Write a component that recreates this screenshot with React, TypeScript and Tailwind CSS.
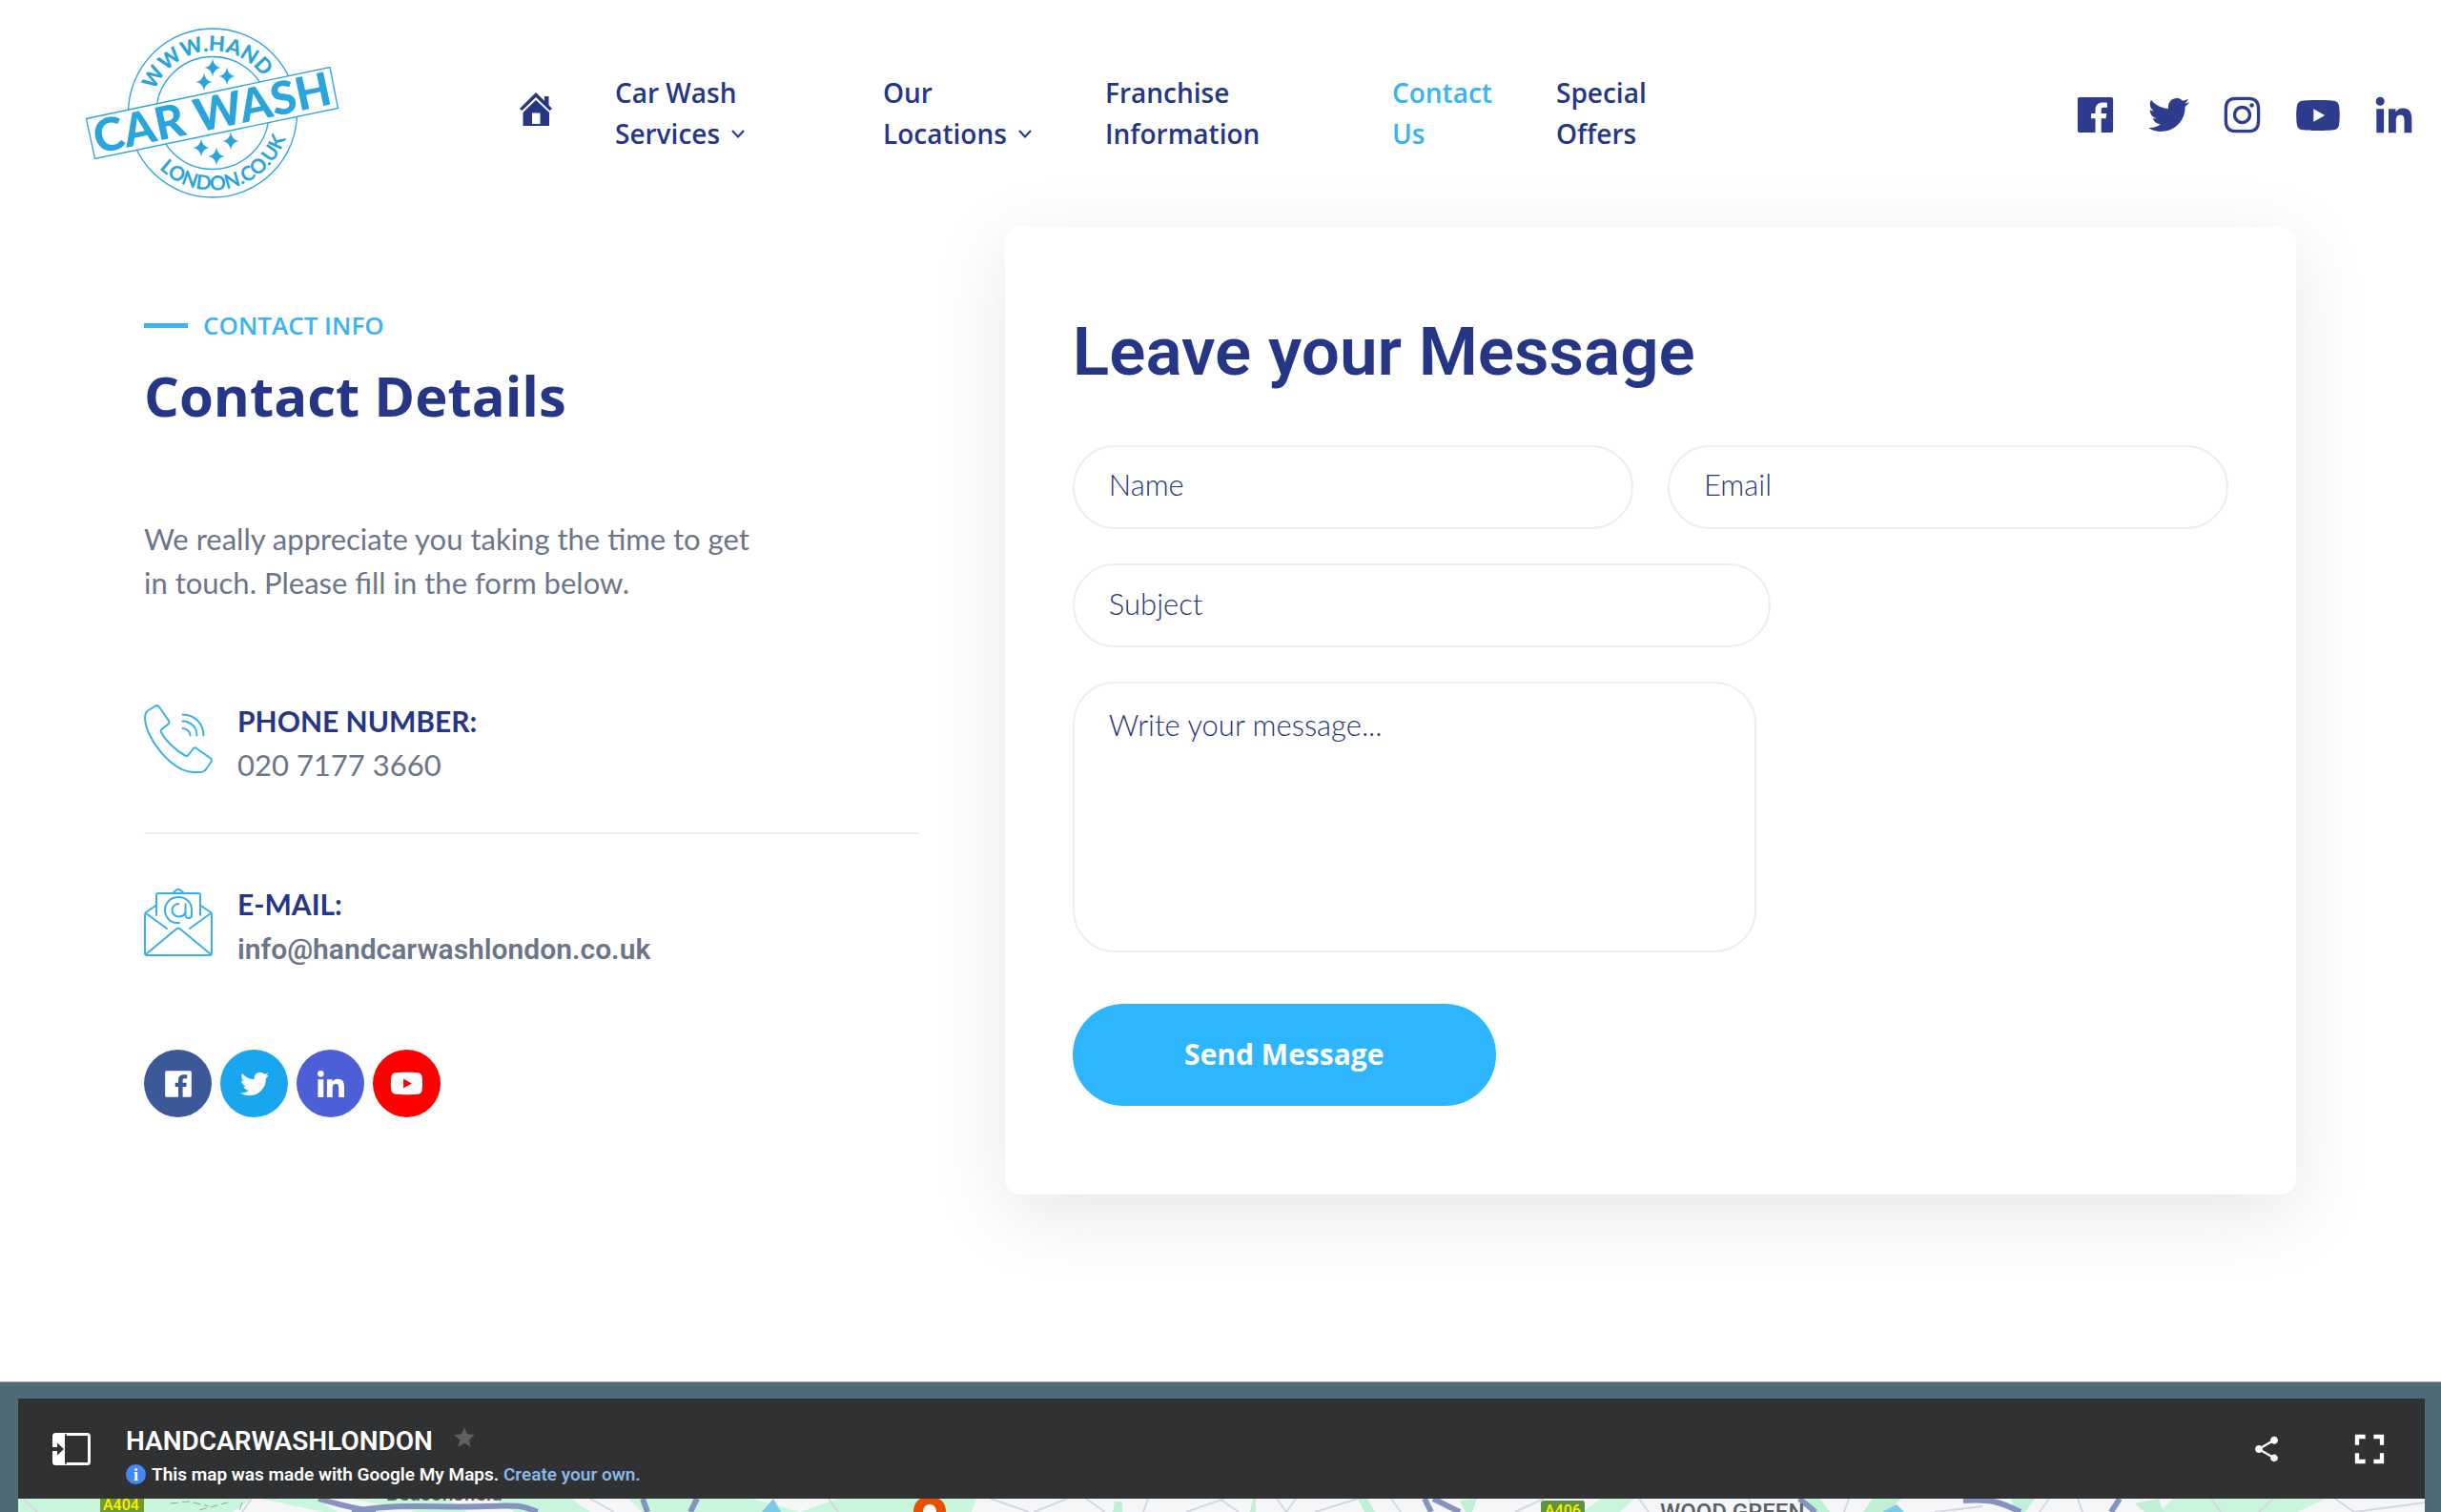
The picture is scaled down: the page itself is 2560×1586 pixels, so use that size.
import React from 'react';
import { FaInstagram, FaTwitter, FaYoutube } from 'react-icons/fa';
import { MdFullscreen, MdShare, MdStar } from 'react-icons/md';

function Logo() {
  const stars = [
    [163, 61],
    [154, 76],
    [178, 70],
    [182, 138],
    [151, 145],
    [167, 154],
  ];
  return (
    <svg viewBox="29 19 267 179" className="w-[267px] shrink-0" role="img" aria-label="Hand Car Wash London">
      <defs>
        <path id="arc-top" d="M98 108.5A65 65 0 0 1 228 108.5" />
        <path id="arc-bottom" d="M82 108.5A81 81 0 0 0 244 108.5" />
      </defs>
      <g fill="none" stroke="#2aa4dc" strokeWidth="1.3">
        <circle cx="163" cy="108.5" r="88.5" />
        <circle cx="163" cy="108.5" r="59" />
        <path d="M30.5 114.5L286 60.5L294.5 103.5L39.5 156.5Z" fill="#fff" />
      </g>
      <g fill="#2aa4dc" fontFamily="Lato, sans-serif" fontWeight="900" textAnchor="middle">
        <text fontSize="22">
          <textPath href="#arc-top" startOffset="46%">WWW.HAND</textPath>
        </text>
        <text fontSize="21" fontWeight="700">
          <textPath href="#arc-bottom" startOffset="57.5%">LONDON.CO.UK</textPath>
        </text>
        <text fontSize="48" transform="translate(166 125) rotate(-12)">CAR WASH</text>
      </g>
      {stars.map(([x, y]) => (
        <path
          key={`${x}-${y}`}
          transform={`translate(${x} ${y})`}
          d="M0-9.5Q1.2-1.2 8.5 0Q1.2 1.2 0 9.5Q-1.2 1.2-8.5 0Q-1.2-1.2 0-9.5Z"
          fill="#2aa4dc"
        />
      ))}
    </svg>
  );
}

function HomeIcon() {
  return (
    <svg viewBox="0 0 34 35" className="h-[35px] w-[34px]" fill="#263686">
      <path d="M17 0L0 17L2.5 19L17 5L31.500 19L34 17L30.500 13.200V4H26V8.800Z" />
      <path d="M17 8L3.500 21V35H31V21ZM13 21.500H21.500V33H13Z" fillRule="evenodd" />
    </svg>
  );
}

function Chevron() {
  return (
    <svg viewBox="0 0 14 9" className="mb-1.5 ml-3 inline-block h-[9px] w-[14px] align-middle" fill="none" stroke="#263686" strokeWidth="2">
      <path d="M1 1L7 7.500L13 1" />
    </svg>
  );
}

function FacebookIcon({ className }: { className: string }) {
  return (
    <svg viewBox="34 34 444 444" className={className} fill="currentColor">
      <path d="M426.800 64H85.200C73.500 64 64 73.500 64 85.200v341.600c0 11.700 9.500 21.200 21.200 21.200H256V296h-45.900v-56H256v-41.400c0-49.600 34.400-76.600 78.700-76.600 21.200 0 44 1.600 49.300 2.300v51.800h-35.300c-24.100 0-28.700 11.400-28.700 28.200V240h57.400l-7.500 56H320v152h106.800c11.700 0 21.200-9.500 21.200-21.200V85.200c0-11.700-9.500-21.200-21.200-21.200z" />
    </svg>
  );
}

function LinkedinIcon({ className }: { className: string }) {
  return (
    <svg viewBox="-32 -32 512 512" className={className} fill="currentColor">
      <path d="M100.280 448H7.400V148.900h92.880zM53.790 108.100C24.090 108.100 0 83.500 0 53.800a53.790 53.790 0 0 1 107.580 0c0 29.700-24.100 54.300-53.790 54.300zM447.900 448h-92.680V302.400c0-34.700-.7-79.200-48.290-79.200-48.290 0-55.690 37.700-55.690 76.700V448h-92.780V148.900h89.080v40.800h1.300c12.400-23.500 42.690-48.300 87.880-48.300 94 0 111.280 61.900 111.280 142.300V448z" />
    </svg>
  );
}

function PhoneIcon() {
  return (
    <svg viewBox="0 0 72 72" className="h-[72px] w-[72px] shrink-0" fill="none" stroke="#3aafea" strokeWidth="2" strokeLinecap="round" strokeLinejoin="round">
      <path d="M12 1.500L4 6.500Q1 9 1 14C1 34 28 70 52 71H58Q63 71 65 68L70.500 60Q71.500 58 70 56.500L55 46Q53 44.500 51.500 46.500L46.500 53Q45 54.500 43 53.500C33 48 22 37 18 29Q17 27 18.500 26L25.500 20.500Q27 19 26 17L15.500 2Q14 .5 12 1.500Z" />
      <path d="M40.500 10.500C53 10.500 62.500 20 62.500 32.500M40.500 17.500C49 17.500 55.500 24 55.500 32.500M40.500 25C45 25 48.500 28.500 48.500 32.500" />
    </svg>
  );
}

function MailIcon() {
  return (
    <svg viewBox="0 0 72 72" className="h-[72px] w-[72px] shrink-0" fill="none" stroke="#3aafea" strokeWidth="2" strokeLinecap="round" strokeLinejoin="round">
      <path d="M13 18.500L2 26Q1 27 1 28.500V69Q1 71 3 71H69Q71 71 71 69V28.500Q71 27 70 26L59 18.500" />
      <path d="M13 29V8Q13 6 15 6H57Q59 6 59 8V29M30 6L34 2.500Q36 1 38 2.500L42 6" />
      <path d="M2 27L24 43M70 27L48 43M2 70L34.500 43Q36 42 37.500 43L70 70" />
      <path d="M37 37C28 38 22 31 22 23.500C22 16 28 10 36 10C44 10 50 15.500 50 23V29C50 33 44 33.500 43.500 29V17.500M43.500 25C43 28.500 40 30.500 36.500 30.500C32.500 30.500 29.500 27.500 29.500 23.800C29.500 20 32.500 17 36.500 17" />
    </svg>
  );
}

function SidePanelIcon() {
  return (
    <svg viewBox="0 0 40 34" className="h-[34px] w-10">
      <rect x="1.500" y="1.500" width="37" height="31" rx="2" fill="none" stroke="#fff" strokeWidth="3" />
      <path d="M2 1H13V33H2Z" fill="#fff" />
      <path d="M0 15H5V10.500L12 17L5 23.500V19H0Z" fill="#2f3132" />
      <path d="M14 1V33" stroke="#2f3132" strokeWidth="1.500" />
    </svg>
  );
}

const navItems = [
  { lines: ['Car Wash', 'Services'], menu: true, className: 'w-[281px] text-[#263686]' },
  { lines: ['Our', 'Locations'], menu: true, className: 'w-[233px] text-[#263686]' },
  { lines: ['Franchise', 'Information'], menu: false, className: 'w-[301px] text-[#263686]' },
  { lines: ['Contact', 'Us'], menu: false, className: 'w-[172px] text-[#36b4f4]' },
  { lines: ['Special', 'Offers'], menu: false, className: 'text-[#263686]' },
];

function Header() {
  return (
    <header className="flex items-center pt-[29px] pr-7 pb-[30px] pl-[89px]">
      <a href="#home"><Logo /></a>
      <nav className="ml-[189px]">
        <ul className="flex items-center font-['Open_Sans',sans-serif] text-[28px] leading-[43px] font-semibold">
          <li className="w-[100px] pb-2">
            <a href="#home" aria-label="Home"><HomeIcon /></a>
          </li>
          {navItems.map((item) => (
            <li key={item.lines[0]} className={item.className}>
              <a href="#menu">
                {item.lines[0]}
                <br />
                {item.lines[1]}
                {item.menu && <Chevron />}
              </a>
            </li>
          ))}
        </ul>
      </nav>
      <div className="ml-auto flex items-center gap-[34px] pt-1 text-[#2d3c8c]">
        <a href="#facebook" aria-label="Facebook"><FacebookIcon className="size-[43px]" /></a>
        <a href="#twitter" aria-label="Twitter"><FaTwitter className="size-[43px]" /></a>
        <a href="#instagram" aria-label="Instagram"><FaInstagram className="size-[43px]" /></a>
        <a href="#youtube" aria-label="YouTube"><FaYoutube className="size-12" /></a>
        <a href="#linkedin" aria-label="LinkedIn"><LinkedinIcon className="size-[43px]" /></a>
      </div>
    </header>
  );
}

function ContactDetails() {
  const circle = 'flex size-[71px] items-center justify-center rounded-full text-white';
  return (
    <section className="w-2/5 pt-[83px] pr-[89px]">
      <div className="flex items-center gap-4">
        <span className="h-[5px] w-[46px] bg-[#36b4f4]" />
        <span className="font-['Open_Sans',sans-serif] text-[26px] leading-10 font-semibold text-[#36b4f4]">CONTACT INFO</span>
      </div>
      <h2 className="mt-3.5 font-['Open_Sans',sans-serif] text-[58px] leading-20 font-bold text-[#263686]">Contact Details</h2>
      <p className="mt-[87px] max-w-[680px] font-[Lato,sans-serif] text-[31px] leading-[46px] text-[#6b7589]">
        We really appreciate you taking the time to get<br />in touch. Please fill in the form below.
      </p>

      <div className="mt-[99px] flex items-start gap-[26px] border-b-2 border-[#f1f1f2] pb-12">
        <div className="pt-1.5"><PhoneIcon /></div>
        <div className="font-[Lato,sans-serif] leading-[46px]">
          <h3 className="text-[30px] font-bold text-[#263686]">PHONE NUMBER:</h3>
          <a href="tel:02071773660" className="block text-[31px] text-[#6b7589]">020 7177 3660</a>
        </div>
      </div>
      <div className="mt-[50px] flex items-start gap-[26px]">
        <div className="pt-1.5"><MailIcon /></div>
        <div className="text-[30px] leading-[46px]">
          <h3 className="font-[Lato,sans-serif] font-bold text-[#263686]">E-MAIL:</h3>
          <a href="mailto:info@handcarwashlondon.co.uk" className="block pt-0.5 font-[Roboto,sans-serif] font-semibold text-[#6b7589]">
            info@handcarwashlondon.co.uk
          </a>
        </div>
      </div>

      <div className="mt-[82px] flex gap-[9px]">
        <a href="#facebook" aria-label="Facebook" className={`${circle} bg-[#3b5998]`}><FacebookIcon className="size-8" /></a>
        <a href="#twitter" aria-label="Twitter" className={`${circle} bg-[#1aa6ef]`}><FaTwitter className="size-[30px]" /></a>
        <a href="#linkedin" aria-label="LinkedIn" className={`${circle} bg-[#4c5fd7]`}><LinkedinIcon className="size-8" /></a>
        <a href="#youtube" aria-label="YouTube" className={`${circle} bg-[#ff0000]`}><FaYoutube className="size-[35px]" /></a>
      </div>
    </section>
  );
}

function MessageForm() {
  const field =
    "block border-2 border-[#ededee] bg-white px-9 font-[Lato,sans-serif] text-[31px] leading-[46px] font-light text-[#263686] placeholder:text-[#263478] placeholder:opacity-100";
  return (
    <section className="w-3/5 rounded-2xl bg-white px-[71px] pt-[89px] pb-[93px] shadow-[0_20px_80px_rgba(20,25,50,0.11)]">
      <h2 className="font-[Roboto,sans-serif] text-[71px] leading-[84px] font-semibold text-[#263686]">Leave your Message</h2>
      <form className="mt-14" onSubmit={(e) => e.preventDefault()}>
        <div className="grid grid-cols-2 gap-9">
          <input type="text" aria-label="Name" placeholder="Name" className={`${field} h-[88px] w-full rounded-full pb-1.5`} />
          <input type="email" aria-label="Email" placeholder="Email" className={`${field} h-[88px] w-full rounded-full pb-1.5`} />
        </div>
        <input type="text" aria-label="Subject" placeholder="Subject" className={`${field} mt-9 h-[88px] w-[732px] rounded-full pb-1`} />
        <textarea
          aria-label="Message"
          placeholder="Write your message..."
          className={`${field} mt-9 h-[284px] w-[717px] resize-none rounded-[44px] pt-5`}
        />
        <button
          type="submit"
          className="mt-[54px] h-[107px] w-[444px] rounded-full bg-[#2db5ff] pb-0.5 font-['Open_Sans',sans-serif] text-[30px] font-bold text-white"
        >
          Send Message
        </button>
      </form>
    </section>
  );
}

function MapStrip() {
  return (
    <svg viewBox="0 0 2524 14" preserveAspectRatio="xMinYMin slice" className="min-h-[14px] w-full flex-1 bg-[#f5f6f7]">
      <g fill="#c9f5dc">
        <path d="M0 0H245L225 14H0Z M255 0H312L335 14H320Z M350 0H450L470 14H420Z M500 0H580L600 14H520Z M640 0H770L820 14H655Z M860 0H1005L1000 14H820Z" />
        <path d="M2260 0H2420L2390 14H2245Z M1660 0H1695L1680 14H1640Z" />
      </g>
      <g fill="#bff0d6">
        <path d="M1150 3H1158V14H1148Z M1295 0H1298V14H1292Z M1405 0H1415L1423 14H1412Z M1512 2L1530 0L1525 14H1518Z M1875 0H1890L1900 14H1880Z M1945 0H1975L1960 14H1935Z M2090 0H2115L2105 14H2095Z M2220 5L2245 0L2250 14H2230Z" />
      </g>
      <path d="M792 0L800 14H780Z M1970 6L1978 14H1955Z" fill="#7ccbe6" />
      <g fill="none" stroke="#8494bf" strokeWidth="6">
        <path d="M315 0C335 6 350 10 375 14M350 14C390 4 440 10 490 8S530 10 545 14M655 0L660 14M712 0L705 14M1475 0L1482 14M1484 0L1512 14M1868 0L1885 14M2040 2C2070 0 2080 4 2100 14M2204 0L2195 14" />
      </g>
      <g fill="none" stroke="#d4d6e0" strokeWidth="2">
        <path d="M5 0L20 14M245 0L235 14M600 0L625 14M850 0L860 14M1020 0L1060 14M1065 14L1100 0M1120 0L1140 14M1185 0L1180 14M1225 14L1265 0M1260 0L1280 14M1320 0L1330 14L1340 0M1360 14L1405 0M1440 0L1450 14M1570 14L1600 0M1700 0L1710 14M1815 0L1820 14M1920 0L1915 14M2010 14L2060 8M2130 0L2120 14M2160 0L2165 14M2300 0L2310 14M2350 14L2365 0M2430 0L2450 14L2524 4" />
      </g>
      <path d="M160 5L180 3L200 8M190 12L220 4M235 4L232 12" fill="none" stroke="#8fa89a" strokeDasharray="8 4" />
      <path d="M86 0H132V14H86Z" fill="#6f9a2f" />
      <path d="M1597 14V5Q1597 2 1600 2H1640Q1643 2 1643 5V14Z" fill="#5f9440" />
      <path d="M939 14C939 4 945 -2 956 -2S973 4 973 14Z" fill="#e65100" />
      <circle cx="956" cy="13" r="7" fill="#fff" />
      <g fontFamily="Roboto, sans-serif" fontWeight="500">
        <text x="89" y="12" fontSize="16" fill="#fff000">A404</text>
        <text x="1601" y="18" fontSize="16" fill="#fff000">A406</text>
        <text x="386" y="2" fontSize="21" fill="#5b6064">Beaconsfield</text>
        <text x="1722" y="22" fontSize="24" fill="#5b6064">WOOD GREEN</text>
      </g>
    </svg>
  );
}

function MapEmbed() {
  return (
    <section className="flex flex-1 flex-col border-t border-[#a3b1b8] bg-[#4f6a77] pt-[17px] pr-[17px] pl-[19px] font-[Roboto,sans-serif]">
      <div className="flex h-[105px] items-center bg-[#2f3132] pr-8 pl-9 text-white">
        <button type="button" aria-label="Toggle side panel"><SidePanelIcon /></button>
        <div className="ml-[37px] pt-4">
          <div className="flex items-center gap-5">
            <h2 className="text-[28px] leading-[38px] font-semibold">HANDCARWASHLONDON</h2>
            <button type="button" aria-label="Star this map" className="pb-2"><MdStar className="size-[26px] text-[#5e6061]" /></button>
          </div>
          <p className="flex items-center gap-1.5 text-[19px] leading-8 font-semibold">
            <span className="flex size-[21px] items-center justify-center rounded-full bg-[#4587f4] font-['Liberation_Serif',serif] text-[18px] font-bold">i</span>
            <span>
              This map was made with Google My Maps. <a href="#create" className="text-[#8ab8e6]">Create your own.</a>
            </span>
          </p>
        </div>
        <div className="ml-auto flex items-center gap-[66px]">
          <button type="button" aria-label="Share"><MdShare className="size-8" /></button>
          <button type="button" aria-label="Full screen"><MdFullscreen className="size-[52px]" /></button>
        </div>
      </div>
      <MapStrip />
    </section>
  );
}

export default function App() {
  return (
    <div className="flex min-h-screen flex-col bg-white">
      <Header />
      <main className="flex items-stretch pr-[152px] pb-[196px] pl-[151px]">
        <ContactDetails />
        <MessageForm />
      </main>
      <MapEmbed />
    </div>
  );
}
